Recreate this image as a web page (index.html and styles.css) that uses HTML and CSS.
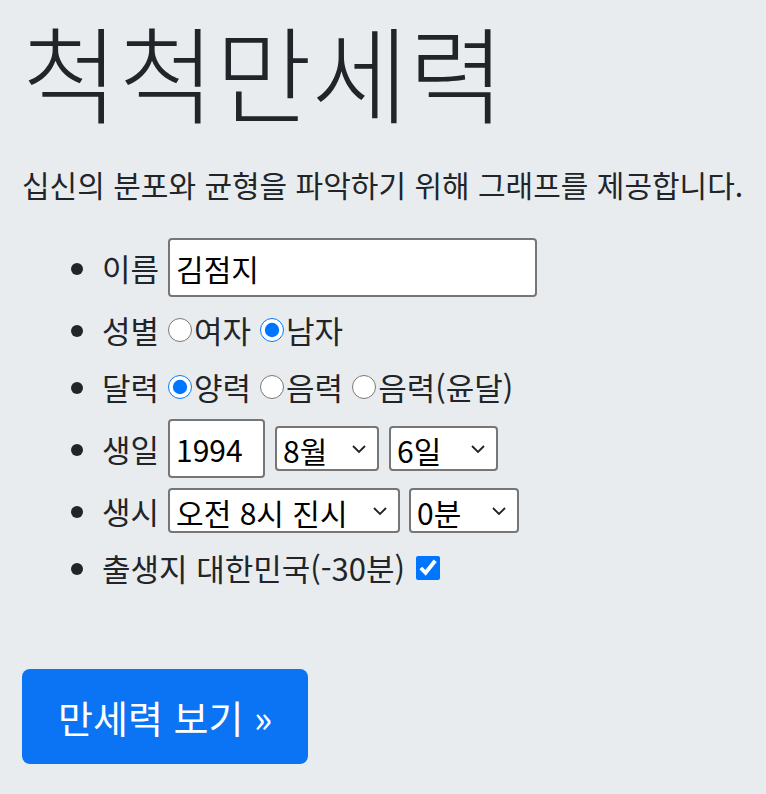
FILE: index.html
```html
<!DOCTYPE html>
<html lang="ko">
<head>
  <meta charset="UTF-8">
  <meta name="viewport" content="width=device-width, initial-scale=1.0">
  <title>척척만세력</title>
  <link rel="stylesheet" href="styles.css">
</head>
<body>
  <div class="jumbotron">
    <h1 class="title">척척만세력</h1>
    <p class="lead">십신의 분포와 균형을 파악하기 위해 그래프를 제공합니다.</p>

    <ul class="form-list">
      <li>
        <span class="row">
          <span>이름</span>
          <input type="text" class="name-input" value="김점지">
        </span>
      </li>
      <li>
        <span class="row">
          <span>성별</span>
          <label class="choice"><input type="radio" name="gender">여자</label>
          <label class="choice"><input type="radio" name="gender" checked>남자</label>
        </span>
      </li>
      <li>
        <span class="row">
          <span>달력</span>
          <label class="choice"><input type="radio" name="calendar" checked>양력</label>
          <label class="choice"><input type="radio" name="calendar">음력</label>
          <label class="choice"><input type="radio" name="calendar">음력(윤달)</label>
        </span>
      </li>
      <li>
        <span class="row">
          <span>생일</span>
          <input type="text" class="year-input" value="1994">
          <select class="sel sel-month">
            <option>8월</option>
          </select>
          <select class="sel sel-day">
            <option>6일</option>
          </select>
        </span>
      </li>
      <li>
        <span class="row">
          <span>생시</span>
          <select class="sel sel-hour">
            <option>오전 8시 진시</option>
          </select>
          <select class="sel sel-min">
            <option>0분</option>
          </select>
        </span>
      </li>
      <li>
        <span class="row">
          <span>출생지 대한민국(-30분)</span>
          <input type="checkbox" class="check" checked>
        </span>
      </li>
    </ul>

    <button class="btn-main">만세력 보기 &raquo;</button>
  </div>
</body>
</html>
```

FILE: styles.css
```css
body {
  margin: 0;
  background-color: #e9ecef;
  color: #212529;
  font-family: "Noto Sans CJK KR", "Noto Sans", sans-serif;
}
.jumbotron {
  padding: 6px 22px 20px;
}
.title {
  margin: 0 0 30px;
  font-family: "Noto Sans CJK KR Light", "Noto Sans CJK KR", sans-serif;
  font-size: 105px;
  font-weight: 300;
  line-height: 1.2;
}
.lead {
  margin: 0 0 31px;
  font-size: 30px;
  line-height: 1.5;
}
.form-list {
  margin: 0 0 77px;
  padding-left: 80px;
  font-size: 31px;
  line-height: 1.2;
}
.form-list li {
  margin-bottom: 8px;
}
.row {
  display: inline-flex;
  align-items: center;
  gap: 9px;
  min-height: 49px;
}
.choice {
  display: inline-flex;
  align-items: center;
  gap: 2px;
}
.choice input {
  width: 24px;
  height: 24px;
  margin: 0;
}
input[type="text"] {
  height: 59px;
  box-sizing: border-box;
  padding: 0 6px;
  border: 2px solid #767676;
  border-radius: 4px;
  background: #fff;
  font-family: inherit;
  font-size: 30px;
  color: #000;
}
.name-input {
  width: 369px;
}
.year-input {
  width: 97px;
}
.sel {
  height: 45px;
  box-sizing: border-box;
  padding: 0 6px;
  border: 2px solid #767676;
  border-radius: 4px;
  background: #fff url("data:image/svg+xml,%3Csvg xmlns='http://www.w3.org/2000/svg' width='16' height='10' viewBox='0 0 16 10'%3E%3Cpath d='M2 2l6 6 6-6' fill='none' stroke='%23222' stroke-width='1.8'/%3E%3C/svg%3E") no-repeat right 10px center;
  font-family: inherit;
  font-size: 30px;
  color: #000;
  appearance: none;
  -webkit-appearance: none;
}
.sel-month {
  width: 104px;
  margin-left: 1px;
}
.sel-day {
  width: 109px;
  margin-left: 1px;
}
.sel-hour {
  width: 232px;
}
.sel-min {
  width: 110px;
}
.check {
  width: 24px;
  height: 24px;
  margin: 0 0 0 2px;
}
.btn-main {
  padding: 19px 36px;
  border: none;
  border-radius: 8px;
  background-color: #0a74f5;
  color: #fff;
  font-family: inherit;
  font-size: 38px;
  line-height: 1.5;
  cursor: pointer;
}
```
